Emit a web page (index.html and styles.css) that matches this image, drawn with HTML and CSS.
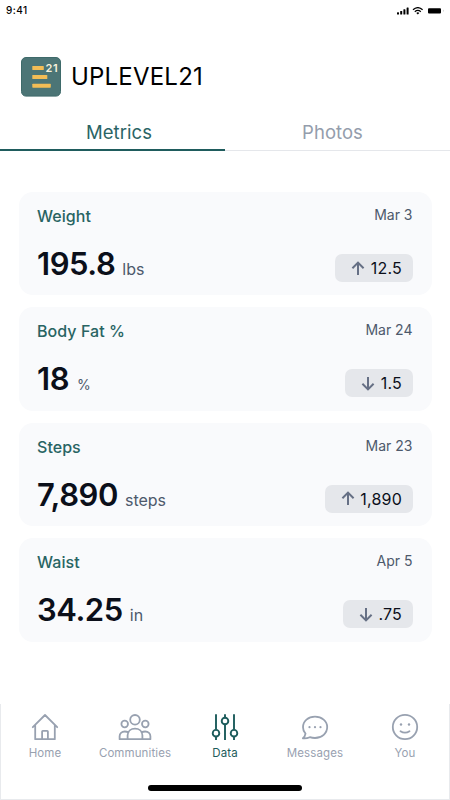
FILE: index.html
```html
<!DOCTYPE html>
<html lang="en">
<head>
<meta charset="utf-8">
<title>UPLEVEL21</title>
<link rel="stylesheet" href="styles.css">
</head>
<body>
<div class="screen">
  <div class="status">
    <span class="time">9:41</span>
    <svg class="status-icons" width="50" height="10" viewBox="0 0 50 10">
      <g fill="#000"><rect x="0" y="5.2" width="2" height="2.3" rx=".5"/><rect x="3.2" y="4" width="2" height="3.5" rx=".5"/><rect x="6.4" y="2.2" width="2" height="5.3" rx=".5"/><rect x="9.6" y=".4" width="2" height="7.1" rx=".5"/>
      <rect x="31" y="1.2" width="13" height="5.2" rx="1"/></g>
      <g fill="none" stroke="#000" stroke-width="1.3"><path d="M16 2.7Q20.8-1.4 25.6 2.7M17.8 4.7Q20.8 2.1 23.8 4.7"/></g>
      <path d="M19.3 5.9Q20.8 4.7 22.3 5.9L20.8 7.4Z"/>
      <path d="M46 2.6v2.5q1.2-1.2 0-2.5" fill="#aaa"/>
    </svg>
  </div>
  <header class="brand">
    <svg class="logo" width="40" height="40" viewBox="0 0 40 40">
      <rect x=".5" y=".5" width="39" height="38.6" rx="4.5" fill="#4c7576" stroke="#3e6a6a"/>
      <g fill="#f3bd56"><rect x="11.3" y="9" width="11.5" height="4" rx=".6"/><rect x="11.3" y="18" width="15" height="4" rx=".6"/><rect x="11.3" y="26.7" width="18.5" height="4" rx=".6"/></g>
      <text class="logo-num" x="24.6" y="14.6" textLength="12">21</text>
    </svg>
    <h1>UPLEVEL21</h1>
  </header>
  <nav class="tabs">
    <div class="tab on"><span>Metrics</span></div>
    <div class="tab"><span>Photos</span></div>
  </nav>
  <main class="cards">
    <section class="card">
      <div class="row top"><h2>Weight</h2><time>Mar 3</time></div>
      <div class="row bottom"><p><b>195.8</b><span>lbs</span></p>
        <div class="chip"><svg width="14" height="15" viewBox="0 0 14 15"><path d="M7 14V2M1.4 7.2L7 1.6L12.6 7.2"/></svg><span>12.5</span></div></div>
    </section>
    <section class="card">
      <div class="row top"><h2>Body Fat %</h2><time>Mar 24</time></div>
      <div class="row bottom"><p><b>18</b><span class="pct">%</span></p>
        <div class="chip"><svg width="14" height="15" viewBox="0 0 14 15"><path d="M7 1V13M1.4 7.8L7 13.4L12.6 7.8"/></svg><span>1.5</span></div></div>
    </section>
    <section class="card">
      <div class="row top"><h2>Steps</h2><time>Mar 23</time></div>
      <div class="row bottom"><p><b>7,890</b><span>steps</span></p>
        <div class="chip"><svg width="14" height="15" viewBox="0 0 14 15"><path d="M7 14V2M1.4 7.2L7 1.6L12.6 7.2"/></svg><span>1,890</span></div></div>
    </section>
    <section class="card">
      <div class="row top"><h2>Waist</h2><time>Apr 5</time></div>
      <div class="row bottom"><p><b>34.25</b><span>in</span></p>
        <div class="chip"><svg width="14" height="15" viewBox="0 0 14 15"><path d="M7 1V13M1.4 7.8L7 13.4L12.6 7.8"/></svg><span>.75</span></div></div>
    </section>
  </main>
  <footer class="dock">
    <div class="items">
      <div class="item"><svg width="34" height="28" viewBox="0 0 34 28"><path d="M4.8 14.2L17 2L29.2 14.2M7.2 12V26.2H26.8V12M14.1 26V18.5Q14.1 17.8 14.8 17.8H19.2Q19.9 17.8 19.9 18.5V26"/></svg><span>Home</span></div>
      <div class="item"><svg width="34" height="28" viewBox="0 0 34 28"><circle cx="17" cy="6.8" r="4.8"/><circle cx="6.7" cy="11" r="3.3"/><circle cx="27.3" cy="11" r="3.3"/><path d="M9.6 26.2V22.3C9.6 18 13 15.6 17 15.6S24.4 18 24.4 22.3V26.2M10.5 19.4Q8.8 18.5 6.8 18.5C3.7 18.5 1.6 20.5 1.6 23.2V26.2H32.4V23.2C32.4 20.5 30.3 18.5 27.2 18.5Q25.2 18.5 23.5 19.4"/></svg><span>Communities</span></div>
      <div class="item on"><svg width="34" height="28" viewBox="0 0 34 28"><path d="M8 1.2V16.5M8 23.5V27M17 1.2V4.5M17 11.5V27M26 1.2V16.5M26 23.5V27"/><circle cx="8" cy="20.2" r="3.3"/><circle cx="17" cy="8" r="3.3"/><circle cx="26" cy="20.2" r="3.3"/></svg><span>Data</span></div>
      <div class="item"><svg width="34" height="28" viewBox="0 0 34 28"><path d="M7.5 20.7C5.8 18.9 5 16.8 5 14.2C5 8 10.2 3.7 17 3.7S29.2 8 29.2 14.1S24 25 17 25Q14.3 25 11.8 24.2Q8.5 25.7 4.9 25.3Q7.1 23.5 7.5 20.7Z"/><g class="dots"><circle cx="11.5" cy="14.2" r="1.1"/><circle cx="17" cy="14.2" r="1.1"/><circle cx="22.5" cy="14.2" r="1.1"/></g></svg><span>Messages</span></div>
      <div class="item"><svg width="34" height="28" viewBox="0 0 34 28"><circle cx="17" cy="14" r="12.2"/><path d="M12.5 18.2Q17 21.2 21.5 18.2"/><g class="dots"><circle cx="13" cy="11.5" r="1.2"/><circle cx="21" cy="11.5" r="1.2"/></g></svg><span>You</span></div>
    </div>
    <div class="homebar"></div>
  </footer>
</div>
</body>
</html>
```
FILE: styles.css
```css
* { box-sizing: border-box; margin: 0; padding: 0; }
body { background: #fff; font-family: Inter, "Liberation Sans", sans-serif; }
.screen { width: 450px; height: 800px; display: flex; flex-direction: column; overflow: hidden; }
.status { height: 56px; padding: 4px 6px 0; display: flex; justify-content: space-between; align-items: flex-start; }
.time { font-size: 10px; line-height: 13px; font-weight: 500; letter-spacing: .45px; }
.status-icons { margin: 3px -3px 0 0; }
.brand { height: 58px; padding: 1px 0 0 21px; display: flex; align-items: flex-start; gap: 10px; }
.logo-num { font-size: 11px; font-weight: 600; fill: #f8f3de; }
h1 { font-size: 24px; font-weight: 400; line-height: 40px; letter-spacing: .2px; color: #000; }
.tabs { height: 37px; display: flex; }
.tab { flex: 1; height: 37px; text-align: center; font-size: 18.5px; line-height: 37px; color: #949dac; border-bottom: 1px solid #e5e7eb; letter-spacing: .05px; }
.tab span { margin-right: 10px; }
.tab.on { color: #2a6465; border-bottom: 2px solid #1f5c5d; }
.tab.on span { margin-right: -13px; }
.cards { padding: 41px 18px 0 19px; display: flex; flex-direction: column; gap: 12px; }
.card { height: 103.4px; border-radius: 14px; background: #f9fafc; padding: 12px 19px 0 18px; display: flex; flex-direction: column; }
.row { display: flex; justify-content: space-between; align-items: flex-start; }
.top { height: 40px; }
h2 { font-size: 16px; line-height: 24px; font-weight: 500; letter-spacing: .05px; color: #286463; }
time { font-size: 14px; line-height: 21px; margin-right: .5px; color: #4d596b; }
.bottom { height: 42px; }
p { white-space: nowrap; line-height: 40px; }
b { font-size: 31px; font-weight: 560; letter-spacing: -.45px; color: #0b0f1a; }
p span { font-size: 16px; margin-left: 7px; color: #4d596b; }
p .pct { font-size: 14px; margin-left: 8px; }
.chip { height: 28px; margin-top: 10px; padding: 0 11px 0 16px; border-radius: 7px; background: #e5e7eb; display: flex; align-items: center; gap: 5.5px; font-size: 16px; letter-spacing: .2px; color: #0b0f1a; }
.chip svg { fill: none; stroke: #667085; stroke-width: 2; }
.dock { margin-top: auto; height: 96px; border: 1px solid #e8eaed; border-top: 0; display: flex; flex-direction: column; align-items: center; justify-content: space-between; padding-bottom: 8px; }
.items { display: flex; width: 450px; padding-top: 9px; }
.item { width: 90px; display: flex; flex-direction: column; align-items: center; gap: 4px; font-size: 11.5px; line-height: 16px; color: #98a1b0; letter-spacing: .1px; }
.item svg { fill: none; stroke: currentColor; stroke-width: 1.8; stroke-linejoin: round; stroke-linecap: round; }
.item .dots { fill: currentColor; stroke: none; }
.item.on { color: #1d5c5c; }
.item.on svg { stroke-width: 1.9; stroke-linecap: butt; }
.homebar { width: 154px; height: 6px; border-radius: 3px; background: #000; }
```
